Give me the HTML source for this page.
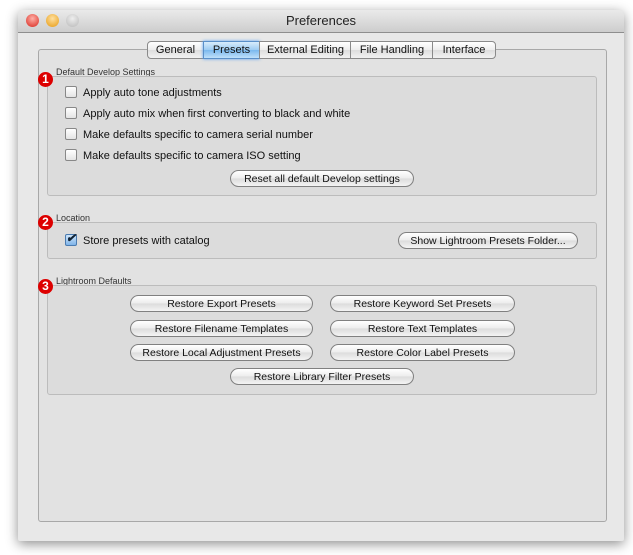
<html><head><style>
body{margin:0;width:633px;height:555px;background:#fff;font-family:"Liberation Sans",sans-serif;position:relative;overflow:hidden}
.win{position:absolute;left:18px;top:10px;width:606px;height:531px;background:#e8e8e8;border-radius:5px 5px 2px 2px;box-shadow:0 3px 12px rgba(0,0,0,.45)}
.tb{position:absolute;left:0;top:0;width:606px;height:22px;background:linear-gradient(#eaeaea,#cdcdcd);border-radius:5px 5px 0 0;border-bottom:1px solid #8e8e8e;text-align:center;font-size:13px;line-height:22px;color:#222}
.dot{position:absolute;top:4px;width:13px;height:13px;border-radius:50%}
.box{position:absolute;border:1px solid #bcbcbc;background:#dcdcdc;border-radius:3px}
.gl{position:absolute;font-size:9px;color:#333}
.cb{position:absolute;font-size:11px;color:#111}
.cb i{display:inline-block;width:10px;height:10px;border:1px solid #888;border-radius:2px;background:linear-gradient(#fff,#e4e4e4);vertical-align:-2px;margin-right:6px}
.btn{position:absolute;height:15px;border:1px solid #808080;border-radius:9px;background:linear-gradient(#fff,#ececec 50%,#dcdcdc 51%,#f4f4f4);font-size:10.5px;text-align:center;line-height:17px;color:#111}
.tab{position:absolute;top:41px;height:16px;border:1px solid #8a8a8a;background:linear-gradient(#fff,#ededed 50%,#dedede 51%,#f2f2f2);font-size:11px;text-align:center;line-height:17px;color:#111}
.num{position:absolute;width:15px;height:15px;border-radius:50%;background:#d00;color:#fff;font-weight:bold;font-size:12px;text-align:center;line-height:15px}
</style></head><body>
<div class="win">
<div class="tb">Preferences
<div class="dot" style="left:8px;background:radial-gradient(circle at 50% 35%,#ffb0a8,#d8261c)"></div>
<div class="dot" style="left:28px;background:radial-gradient(circle at 50% 35%,#ffe0a0,#e69a10)"></div>
<div class="dot" style="left:48px;background:radial-gradient(circle at 50% 35%,#eee,#b8b8b8)"></div>
</div>
</div>
<div class="box" style="left:38px;top:49px;width:567px;height:471px;background:#e2e2e2;border-color:#a8a8a8"></div>
<div class="tab" style="left:147px;width:55px;border-radius:4px 0 0 4px">General</div>
<div class="tab" style="left:203px;width:55px;background:linear-gradient(#d8ecfc,#9ccbf2 50%,#7ab8ee 51%,#bfe0fa);border-color:#5a8fc8;box-shadow:0 0 3px #5aa0f0">Presets</div>
<div class="tab" style="left:259px;width:91px">External Editing</div>
<div class="tab" style="left:350px;width:82px">File Handling</div>
<div class="tab" style="left:432px;width:62px;border-radius:0 4px 4px 0">Interface</div>

<div class="gl" style="left:56px;top:67px">Default Develop Settings</div>
<div class="box" style="left:47px;top:76px;width:548px;height:118px"></div>
<div class="num" style="left:38px;top:72px">1</div>
<div class="cb" style="left:65px;top:86px"><i></i>Apply auto tone adjustments</div>
<div class="cb" style="left:65px;top:107px"><i></i>Apply auto mix when first converting to black and white</div>
<div class="cb" style="left:65px;top:128px"><i></i>Make defaults specific to camera serial number</div>
<div class="cb" style="left:65px;top:149px"><i></i>Make defaults specific to camera ISO setting</div>
<div class="btn" style="left:230px;top:170px;width:182px">Reset all default Develop settings</div>

<div class="gl" style="left:56px;top:213px">Location</div>
<div class="box" style="left:47px;top:222px;width:548px;height:35px"></div>
<div class="num" style="left:38px;top:215px">2</div>
<div class="cb" style="left:65px;top:234px"><i style="background:linear-gradient(#cfe6fb,#7fb4e8);border-color:#4a7bb0;position:relative"><b style="position:absolute;left:0px;top:-4px;font-size:12px;color:#123">✔</b></i>Store presets with catalog</div>
<div class="btn" style="left:398px;top:232px;width:178px">Show Lightroom Presets Folder...</div>

<div class="gl" style="left:56px;top:276px">Lightroom Defaults</div>
<div class="box" style="left:47px;top:285px;width:548px;height:108px"></div>
<div class="num" style="left:38px;top:279px">3</div>
<div class="btn" style="left:130px;top:295px;width:181px">Restore Export Presets</div>
<div class="btn" style="left:330px;top:295px;width:183px">Restore Keyword Set Presets</div>
<div class="btn" style="left:130px;top:320px;width:181px">Restore Filename Templates</div>
<div class="btn" style="left:330px;top:320px;width:183px">Restore Text Templates</div>
<div class="btn" style="left:130px;top:344px;width:181px">Restore Local Adjustment Presets</div>
<div class="btn" style="left:330px;top:344px;width:183px">Restore Color Label Presets</div>
<div class="btn" style="left:230px;top:368px;width:182px">Restore Library Filter Presets</div>
</body></html>
